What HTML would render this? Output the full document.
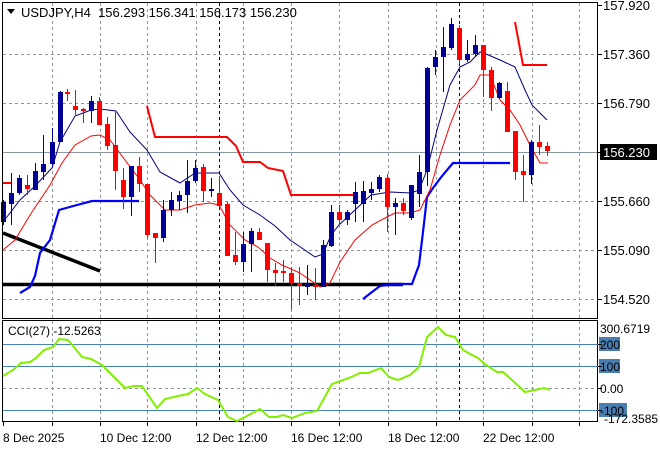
<!DOCTYPE html>
<html><head><meta charset="utf-8"><style>
html,body{margin:0;padding:0;background:#fff;}
svg{display:block;font-family:"Liberation Sans",sans-serif;}
</style></head><body>
<svg width="660" height="450" viewBox="0 0 660 450" xmlns="http://www.w3.org/2000/svg">
<rect width="660" height="450" fill="#fff"/>
<g stroke="#8a96a0" stroke-width="1" stroke-dasharray="3,3">
<path d="M3 54.5H597M3 103.5H597M3 201.5H597M3 250.5H597M3 299.5H597"/>
<path d="M52.5 3V318M100.5 3V318M147.5 3V318M196.5 3V318M243.5 3V318M291.5 3V318M339.5 3V318M388.5 3V318M436.5 3V318M483.5 3V318M532.5 3V318M579.5 3V318"/>
<path d="M52.5 321V420M100.5 321V420M147.5 321V420M196.5 321V420M243.5 321V420M291.5 321V420M339.5 321V420M388.5 321V420M436.5 321V420M483.5 321V420M532.5 321V420M579.5 321V420"/>
<path d="M3 388.5H598"/>
</g>
<g stroke="#000" stroke-width="1" stroke-dasharray="3,3">
<path d="M219.5 3V318M459.5 3V318M219.5 321V420M459.5 321V420"/>
</g>
<path d="M3 152.5H597" stroke="#8a96a0"/>
<path d="M3 233L100 271" stroke="#000" stroke-width="3.5"/>
<path d="M3 284.5H403" stroke="#000" stroke-width="3.5"/>
<path d="M20 293L30 287L35 276L40 253L50 240L59 210L77 205L92 201H139" fill="none" stroke="#0000ff" stroke-width="2.2"/>
<path d="M363 299L372 292L380 286L395 284H412L419 265L423 232L427 197L433 188L442 176L453 163H510" fill="none" stroke="#0000ff" stroke-width="2.2"/>
<path d="M3 183H12M147 106L155 137H227L236 146L243 162H260L268 168L283 171L291 195H355M515 22L523 65H547" fill="none" stroke="#ff0000" stroke-width="2"/>
<path d="M3 222L20 200L35 186L52 168L60 142L75 116L91 110L100 109L116 111L130 132L147 150L160 172L180 183L195 173L219 173L230 190L243 205L260 215L275 226L290 240L315 257L323 254L331 235L339 225L355 210L371 195L390 192L411 193L419 190L427 170L437 130L450 85L460 67L470 62L480 52L486 54L500 60L515 67L525 90L532 105L540 113L547 120" fill="none" stroke="#000080" stroke-width="1"/>
<path d="M3 250L15 240L30 215L50 185L62 163L75 145L91 136L100 135L110 140L125 160L140 180L150 195L165 210L180 210L195 205L210 203L219 205L230 225L245 240L258 247L270 258L282 265L300 273L310 280L320 287L330 283L340 262L355 240L372 225L385 218L395 213L410 213L420 210L430 190L440 155L450 125L460 100L475 85L480 75L490 75L500 100L510 110L520 125L530 145L540 163L548 163" fill="none" stroke="#ff0000" stroke-width="1"/>
<g fill="#000096" stroke="#000096">
<path stroke-width="1" d="M3.5 200V225M11.5 173V225M19.5 175V195M35.5 163V190M43.5 135V180M52.5 128V165M60.5 91V142M91.5 96V123M131.5 166V216M163.5 200V242M171.5 192V216M179.5 191V210M187.5 160V213M195.5 160V183M211.5 178V197M243.5 232V272M251.5 228V272M307.5 265V295M323.5 240V287M331.5 205V247M347.5 210V225M355.5 182V222M363.5 181V222M371.5 182V200M379.5 175V192M395.5 198V235M411.5 185V220M419.5 155V207M427.5 67V186M435.5 50V75M443.5 27V92M451.5 18V50M467.5 40V62M475.5 35V57M499.5 82V99M531.5 140V184"/>
<g stroke="none">
<rect x="1" y="202" width="5" height="20"/><rect x="9" y="193" width="5" height="11"/><rect x="17" y="178" width="5" height="15"/><rect x="33" y="171" width="5" height="19"/><rect x="41" y="164" width="5" height="8"/><rect x="50" y="142" width="5" height="22"/><rect x="58" y="92" width="5" height="50"/><rect x="89" y="101" width="5" height="10"/><rect x="129" y="166" width="5" height="31"/><rect x="161" y="210" width="5" height="28"/><rect x="169" y="200" width="5" height="10"/><rect x="177" y="195" width="5" height="6"/><rect x="185" y="181" width="5" height="14"/><rect x="193" y="168" width="5" height="13"/><rect x="209" y="189" width="5" height="2"/><rect x="241" y="244" width="5" height="18"/><rect x="249" y="231" width="5" height="13"/><rect x="305" y="283" width="5" height="4"/><rect x="321" y="245" width="5" height="42"/><rect x="329" y="212" width="5" height="34"/><rect x="345" y="212" width="5" height="8"/><rect x="353" y="192" width="5" height="12"/><rect x="361" y="191" width="5" height="13"/><rect x="369" y="189" width="5" height="4"/><rect x="377" y="177" width="5" height="12"/><rect x="393" y="203" width="5" height="4"/><rect x="409" y="185" width="5" height="33"/><rect x="417" y="172" width="5" height="22"/><rect x="425" y="68" width="5" height="104"/><rect x="433" y="57" width="5" height="10"/><rect x="441" y="47" width="5" height="10"/><rect x="449" y="24" width="5" height="24"/><rect x="465" y="54" width="5" height="6"/><rect x="473" y="45" width="5" height="9"/><rect x="497" y="83" width="5" height="15"/><rect x="529" y="142" width="5" height="33"/>
</g></g>
<g fill="#ff0000" stroke="#ff0000">
<path stroke-width="1" d="M27.5 175V195M67.5 89V101M75.5 90V115M83.5 108V123M99.5 97V125M107.5 117V150M115.5 112V190M123.5 168V209M139.5 157V192M147.5 184V238M155.5 233V263M203.5 164V202M219.5 176V208M227.5 202V256M235.5 232V265M259.5 228V240M267.5 243V282M275.5 263V286M283.5 260V282M291.5 267V310M299.5 267V305M315.5 268V300M339.5 205V225M387.5 174V232M403.5 198V215M459.5 25V64M483.5 45V97M491.5 67V111M507.5 82V132M515.5 131V180M523.5 155V202M539.5 125V155M547.5 142V156"/>
<g stroke="none">
<rect x="25" y="185" width="5" height="4"/><rect x="65" y="92" width="5" height="2"/><rect x="73" y="106" width="5" height="4"/><rect x="81" y="109" width="5" height="2"/><rect x="97" y="101" width="5" height="24"/><rect x="105" y="124" width="5" height="22"/><rect x="113" y="145" width="5" height="26"/><rect x="121" y="180" width="5" height="17"/><rect x="137" y="166" width="5" height="18"/><rect x="145" y="184" width="5" height="51"/><rect x="153" y="233" width="5" height="5"/><rect x="201" y="167" width="5" height="24"/><rect x="217" y="193" width="5" height="13"/><rect x="225" y="204" width="5" height="52"/><rect x="233" y="255" width="5" height="7"/><rect x="257" y="232" width="5" height="8"/><rect x="265" y="243" width="5" height="27"/><rect x="273" y="270" width="5" height="3"/><rect x="281" y="271" width="5" height="2"/><rect x="289" y="273" width="5" height="10"/><rect x="297" y="283" width="5" height="3"/><rect x="313" y="285" width="5" height="2"/><rect x="337" y="212" width="5" height="8"/><rect x="385" y="178" width="5" height="29"/><rect x="401" y="203" width="5" height="8"/><rect x="457" y="28" width="5" height="32"/><rect x="481" y="45" width="5" height="25"/><rect x="489" y="70" width="5" height="28"/><rect x="505" y="91" width="5" height="41"/><rect x="513" y="131" width="5" height="41"/><rect x="521" y="171" width="5" height="4"/><rect x="537" y="142" width="5" height="5"/><rect x="545" y="146" width="5" height="5"/>
</g></g>
<rect x="2.5" y="2.5" width="595" height="316" fill="none" stroke="#000"/>
<rect x="2.5" y="320.5" width="595" height="101" fill="none" stroke="#000"/>
<g font-size="13" fill="#000">
<text x="603" y="10">157.920</text>
<text x="603" y="59">157.360</text>
<text x="603" y="108">156.790</text>
<text x="603" y="206">155.660</text>
<text x="603" y="255">155.090</text>
<text x="603" y="304">154.520</text>
</g>
<g stroke="#000"><path d="M598 5.5h4M598 54.5h4M598 103.5h4M598 152.5h4M598 201.5h4M598 250.5h4M598 299.5h4"/></g>
<rect x="600" y="144" width="57" height="16" fill="#000"/>
<text x="603" y="157" font-size="13" fill="#fff">156.230</text>
<path d="M7 9L15 9L11 14Z" fill="#000"/>
<text x="21" y="17" font-size="13" fill="#000" xml:space="preserve">USDJPY,H4  156.293 156.341 156.173 156.230</text>
<path d="M3 344.5H598M3 366.5H598M3 410.5H598" stroke="#4682b4" stroke-width="1"/>
<polyline fill="none" stroke="#80f000" stroke-width="2" points="3,376 13,370 21,363 30,362 36,358 44,350 53,347 59,339 68,340 74,347 82,357 91,359 102,365 114,377 125,388 133,386 142,386 157,408 165,399 178,396 188,394 197,388 205,394 218,400 228,417 237,421 245,417 260,409 269,417 277,417 283,415 292,418 305,413 317,411 332,384 349,378 360,373 368,373 381,368 389,377 398,380 410,375 419,367 427,337 438,327 446,335 455,337 463,350 472,355 478,358 486,365 497,372 503,372 512,380 525,392 535,390 544,388 550,390"/>
<rect x="599" y="337" width="21" height="14" fill="#4a7eb0"/>
<rect x="599" y="359" width="21" height="14" fill="#4a7eb0"/>
<rect x="599" y="403" width="28" height="14" fill="#4a7eb0"/>
<g font-size="12" fill="#000">
<text x="600" y="333">300.6719</text>
<text x="600" y="349">200</text>
<text x="600" y="371">100</text>
<text x="600" y="393">0.00</text>
<text x="600" y="415">-100</text>
<text x="604" y="423">-172.3585</text>
<text x="8" y="335">CCI(27) -12.5263</text>
</g>
<g stroke="#000"><path d="M598 344.5h4M598 366.5h4M598 388.5h4M598 410.5h4"/>
<path d="M3.5 422v4M52.5 422v4M100.5 422v4M147.5 422v4M196.5 422v4M243.5 422v4M291.5 422v4M339.5 422v4M388.5 422v4M436.5 422v4M483.5 422v4M532.5 422v4M579.5 422v4"/></g>
<g font-size="12" fill="#000">
<text x="3" y="442">8 Dec 2025</text>
<text x="100" y="442">10 Dec 12:00</text>
<text x="196" y="442">12 Dec 12:00</text>
<text x="291" y="442">16 Dec 12:00</text>
<text x="388" y="442">18 Dec 12:00</text>
<text x="483" y="442">22 Dec 12:00</text>
</g>
</svg>
</body></html>
